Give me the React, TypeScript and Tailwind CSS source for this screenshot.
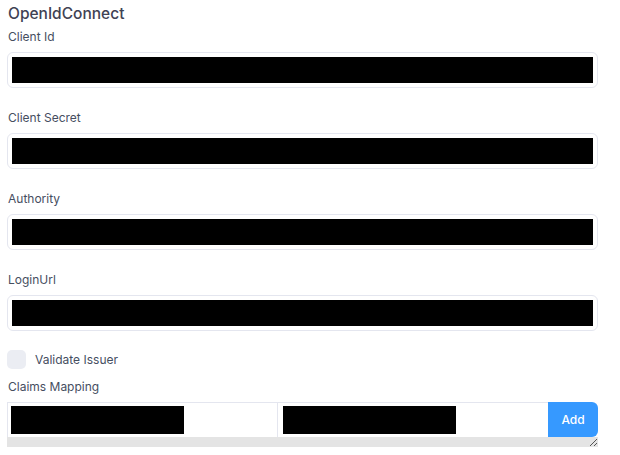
import React from "react";

const fields = ["Client Id", "Client Secret", "Authority", "LoginUrl"];

function RedactedInput() {
  return (
    <div className="h-[36px] w-full rounded-[6px] border border-[#e4e6ef] bg-white p-[4px]">
      <div className="h-full w-full bg-black" />
    </div>
  );
}

export default function App() {
  return (
    <div
      className="min-h-[455px] w-[620px] bg-white pl-[7px] pt-[4px] text-[#3f4254]"
      style={{ fontFamily: "Inter, 'Noto Sans', sans-serif" }}
    >
      <div className="w-[591px]">
        <h1 className="pl-[1px] text-[15.5px] font-medium leading-[20px] text-[#3f4254]">OpenIdConnect</h1>

        {fields.map((f, i) => (
          <div key={f} className={i === 0 ? "mt-[5px]" : "mt-[22px]"}>
            <label className="block pl-[1px] text-[12px] leading-[16px] text-[#464e5f]">{f}</label>
            <div className="mt-[7px]">
              <RedactedInput />
            </div>
          </div>
        ))}

        <div className="mt-[19px] flex items-center gap-[9px]">
          <div className="h-[19px] w-[19px] rounded-[5px] bg-[#ebedf3]" />
          <span className="text-[12px] leading-[16px] text-[#464e5f]">Validate Issuer</span>
        </div>

        <label className="mt-[10px] block pl-[1px] text-[12px] leading-[16px] text-[#464e5f]">Claims Mapping</label>

        <div className="mt-[7px]">
          <div className="flex h-[35px] w-full">
            <div className="flex flex-1 items-stretch border-l border-t border-[#e4e6ef] py-[3px] pl-[3px]">
              <div className="w-[173px] bg-black" />
            </div>
            <div className="flex flex-1 items-stretch border-l border-t border-[#e4e6ef] py-[3px] pl-[5px]">
              <div className="w-[173px] bg-black" />
            </div>
            <button className="w-[50px] rounded-tr-[6px] rounded-br-[6px] bg-[#3699ff] text-[12px] font-medium text-white">
              Add
            </button>
          </div>
          <div className="relative h-[10px] w-full bg-[#e4e4e4]">
            <svg className="absolute bottom-0 right-0" width="9" height="9" viewBox="0 0 9 9">
              <line x1="8" y1="1" x2="1" y2="8" stroke="#555" strokeWidth="1" />
              <line x1="8" y1="5" x2="5" y2="8" stroke="#555" strokeWidth="1" />
            </svg>
          </div>
        </div>
      </div>
    </div>
  );
}
